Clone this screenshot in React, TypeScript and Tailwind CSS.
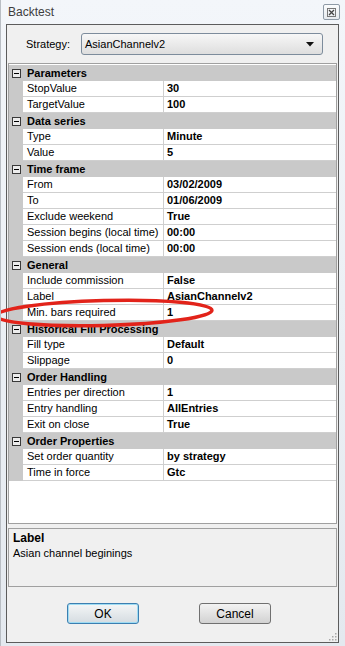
import React from "react";

type Item = { label: string; value: string };
type Cat = { name: string; items: Item[] };

const cats: Cat[] = [
  { name: "Parameters", items: [{ label: "StopValue", value: "30" }, { label: "TargetValue", value: "100" }] },
  { name: "Data series", items: [{ label: "Type", value: "Minute" }, { label: "Value", value: "5" }] },
  {
    name: "Time frame",
    items: [
      { label: "From", value: "03/02/2009" },
      { label: "To", value: "01/06/2009" },
      { label: "Exclude weekend", value: "True" },
      { label: "Session begins (local time)", value: "00:00" },
      { label: "Session ends (local time)", value: "00:00" },
    ],
  },
  {
    name: "General",
    items: [
      { label: "Include commission", value: "False" },
      { label: "Label", value: "AsianChannelv2" },
      { label: "Min. bars required", value: "1" },
    ],
  },
  { name: "Historical Fill Processing", items: [{ label: "Fill type", value: "Default" }, { label: "Slippage", value: "0" }] },
  {
    name: "Order Handling",
    items: [
      { label: "Entries per direction", value: "1" },
      { label: "Entry handling", value: "AllEntries" },
      { label: "Exit on close", value: "True" },
    ],
  },
  { name: "Order Properties", items: [{ label: "Set order quantity", value: "by strategy" }, { label: "Time in force", value: "Gtc" }] },
];

export default function App() {
  return (
    <div className="relative w-[345px] h-[646px] overflow-hidden font-['Liberation_Sans',Arial,sans-serif] text-[11px] text-black bg-gradient-to-b from-[#f3f6fa] to-[#e4e9ef] flex flex-col pl-[5px] pr-[6px] border-l border-[#b9bec4]">
      {/* title bar */}
      <div className="h-[24px] flex items-center justify-between">
        <span className="pl-[2px] text-[12px] text-[#3d3d3d]">Backtest</span>
        <div className="mr-[-1px] w-[17px] h-[16px] rounded-[2px] border border-[#8e9aa6] bg-gradient-to-b from-[#fbfcfd] to-[#e6eaee] flex items-center justify-center">
          <svg width="9" height="9" viewBox="0 0 9 9">
            <rect x="0.5" y="0.5" width="8" height="8" fill="none" stroke="#777" strokeWidth="1" />
            <path d="M2 2 L7 7 M7 2 L2 7" stroke="#444" strokeWidth="1.3" />
          </svg>
        </div>
      </div>

      {/* client area */}
      <div className="relative h-[619px] border border-[#5c5c5c] bg-[#f0f0f0] flex flex-col">
        <div className="mt-[8px] h-[22px] flex items-center">
          <span className="w-[74px] pl-[19px]">Strategy:</span>
          <div className="w-[242px] h-[22px] rounded-[3px] border border-[#7d8c9c] bg-gradient-to-b from-[#f7f7f7] to-[#dedede] flex items-center justify-between pl-[3px] pr-[8px]">
            <span>AsianChannelv2</span>
            <svg width="8" height="5" viewBox="0 0 8 5">
              <path d="M0 0 L8 0 L4 4.5 Z" fill="#111" />
            </svg>
          </div>
        </div>

        {/* property grid */}
        <div className="mt-[8px] mx-[1px] h-[461px] border border-[#a0a0a0] bg-white pt-[1px] flex flex-col">
          {cats.map((c) => (
            <div key={c.name}>
              <div className="h-[16px] bg-[#c9c9c9] flex items-center">
                <div className="w-[14px] flex justify-center">
                  <div className="w-[9px] h-[9px] border border-[#3a3a3a] bg-[#ececec] flex items-center justify-center">
                    <div className="w-[5px] h-[1px] bg-black" />
                  </div>
                </div>
                <span className="pl-[4px] font-bold leading-[15px]">{c.name}</span>
              </div>
              {c.items.map((it) => (
                <div key={it.label} className="h-[16px] flex">
                  <div className="w-[14px] bg-[#c9c9c9]" />
                  <div className="w-[141px] pl-[4px] border-r border-b border-[#cfcfcf] leading-[15px] whitespace-nowrap overflow-hidden">
                    {it.label}
                  </div>
                  <div className="flex-1 pl-[3px] border-b border-[#cfcfcf] font-bold leading-[15px]">{it.value}</div>
                </div>
              ))}
            </div>
          ))}
        </div>

        {/* description */}
        <div className="mt-[4px] mx-[1px] h-[59px] border border-[#a0a0a0] bg-[#f0f0f0] px-[4px] pt-[2px] leading-[15px]">
          <div className="font-bold text-[12px]">Label</div>
          <div>Asian channel beginings</div>
        </div>

        {/* buttons */}
        <div className="mt-[16px] flex pl-[60px] gap-[60px]">
          <button className="w-[72px] h-[21px] rounded-[3px] border border-[#3c7fb1] bg-gradient-to-b from-[#f4f6f7] to-[#d5dce1] shadow-[inset_0_0_0_1px_#9fdcf3] text-[12px]">
            OK
          </button>
          <button className="w-[72px] h-[21px] rounded-[3px] border border-[#707070] bg-gradient-to-b from-[#f3f3f3] to-[#d2d2d2] text-[12px]">
            Cancel
          </button>
        </div>

        {/* resize grip */}
        <svg className="absolute right-[1px] bottom-[1px]" width="8" height="8" viewBox="0 0 8 8">
          <rect x="6" y="0" width="1.5" height="1.5" fill="#a8a8a8" />
          <rect x="3" y="3" width="1.5" height="1.5" fill="#a8a8a8" />
          <rect x="6" y="3" width="1.5" height="1.5" fill="#a8a8a8" />
          <rect x="0" y="6" width="1.5" height="1.5" fill="#a8a8a8" />
          <rect x="3" y="6" width="1.5" height="1.5" fill="#a8a8a8" />
          <rect x="6" y="6" width="1.5" height="1.5" fill="#a8a8a8" />
        </svg>
      </div>

      {/* red annotation */}
      <svg className="absolute left-0 top-0 pointer-events-none" width="345" height="646" viewBox="0 0 345 646">
        <ellipse cx="103" cy="313" rx="108" ry="12.5" fill="none" stroke="#e2231a" strokeWidth="3.5" transform="rotate(-1.5 103 313)" />
      </svg>
    </div>
  );
}
